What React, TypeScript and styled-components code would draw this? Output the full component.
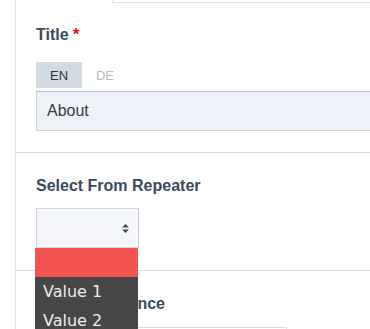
import React from "react";
import styled, { createGlobalStyle } from "styled-components";

const GlobalStyle = createGlobalStyle`
  html, body { margin: 0; padding: 0; background: #fff; }
  body { font-family: "Liberation Sans", Arial, sans-serif; }
  * { box-sizing: border-box; }
`;

const Panel = styled.div`
  margin-left: 15px;
  border-left: 1px solid #dbe3ec;
  height: 329px;
  overflow: hidden;
`;

const TopStub = styled.div`
  height: 3px;
  margin-left: 96px;
  border-left: 1px solid #dde3ea;
  border-bottom: 1px solid #dde3ea;
`;

const Section = styled.div<{ $pt?: number; $pb?: number; $last?: boolean }>`
  padding: ${(p) => p.$pt ?? 23}px 0 ${(p) => p.$pb ?? 22}px 20px;
  border-bottom: ${(p) => (p.$last ? "none" : "1px solid #d6dfe9")};
`;

const Label = styled.div<{ $mb?: number }>`
  font-size: 16px;
  font-weight: 700;
  line-height: 19px;
  color: #394a5d;
  margin-bottom: ${(p) => p.$mb ?? 13}px;
`;

const Required = styled.span`
  color: #ff0000;
`;

const Tabs = styled.div`
  display: flex;
  margin-bottom: 3px;
`;

const Tab = styled.div<{ $active?: boolean }>`
  width: 46px;
  height: 26px;
  display: flex;
  align-items: center;
  justify-content: center;
  font-size: 13px;
  color: ${(p) => (p.$active ? "#333" : "#bbb")};
  background: ${(p) => (p.$active ? "#d2dbe4" : "transparent")};
`;

const TextInput = styled.div`
  height: 40px;
  margin-right: -20px;
  background: #eef2f8;
  border: 1px solid #c9d3df;
  border-top-color: #b4c1d1;
  display: flex;
  align-items: center;
  padding-left: 10px;
  font-size: 16px;
  color: #3a3a3a;
`;

const SelectWrap = styled.div`
  position: relative;
  width: 103px;
`;

const SelectBox = styled.div`
  height: 40px;
  background: #f5f7fa;
  border: 1px solid #cdd6e0;
  display: flex;
  align-items: center;
  justify-content: flex-end;
  padding-right: 9px;
`;

const Dropdown = styled.ul`
  position: absolute;
  top: 100%;
  left: -1px;
  width: 103px;
  margin: 0;
  padding: 0;
  list-style: none;
  z-index: 10;
  font-family: "DejaVu Sans", sans-serif;
  font-size: 16px;
`;

const Option = styled.li<{ $selected?: boolean }>`
  height: 29px;
  line-height: 29px;
  padding-left: 8px;
  background: ${(p) => (p.$selected ? "#f3544f" : "#464646")};
  color: #ececec;
  white-space: nowrap;
`;

const RefBox = styled.div`
  width: 251px;
  height: 40px;
  border: 1px solid #d5dde6;
  background: #fff;
`;

const SortIcon = () => (
  <svg width="7" height="9" viewBox="0 0 7 9">
    <path d="M3.5 0 L7 3.6 L0 3.6 Z M3.5 9 L0 5.4 L7 5.4 Z" fill="#3c4b5c" />
  </svg>
);

export default function App() {
  return (
    <>
      <GlobalStyle />
      <Panel>
        <TopStub />
        <Section $pt={22} $pb={21}>
          <Label $mb={18}>
            Title <Required>*</Required>
          </Label>
          <Tabs>
            <Tab $active>EN</Tab>
            <Tab>DE</Tab>
          </Tabs>
          <TextInput>About</TextInput>
        </Section>
        <Section>
          <Label>Select From Repeater</Label>
          <SelectWrap>
            <SelectBox>
              <SortIcon />
            </SelectBox>
            <Dropdown>
              <Option $selected>&nbsp;</Option>
              <Option>Value 1</Option>
              <Option>Value 2</Option>
            </Dropdown>
          </SelectWrap>
        </Section>
        <Section $last>
          <Label $mb={14}>Select Reference</Label>
          <RefBox />
        </Section>
      </Panel>
    </>
  );
}
